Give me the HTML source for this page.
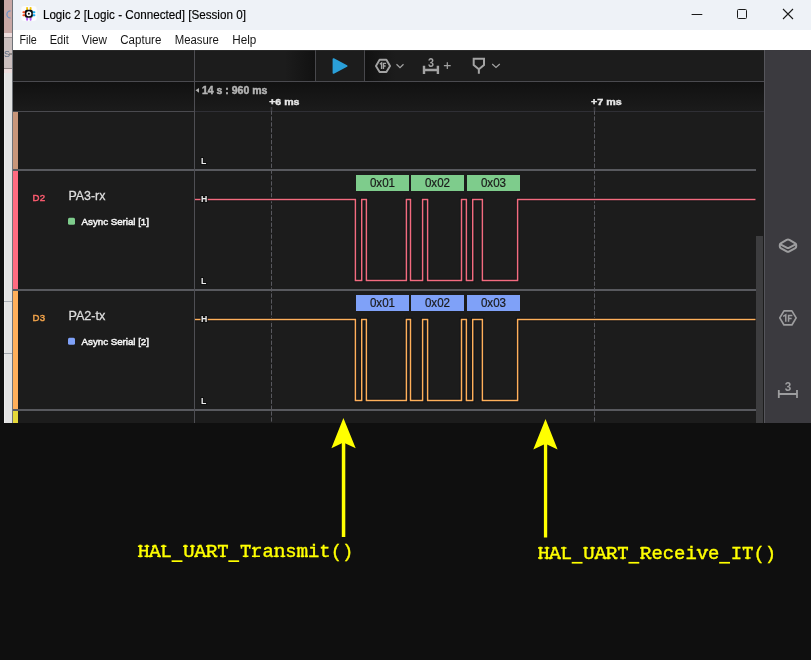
<!DOCTYPE html>
<html><head><meta charset="utf-8">
<style>
html,body{margin:0;padding:0;}
body{width:811px;height:660px;overflow:hidden;background:#0f0f0f;position:relative;font-family:"Liberation Sans",sans-serif;}
.a{position:absolute;}
.t{position:absolute;white-space:nowrap;line-height:1;}
svg text{font-family:"Liberation Sans",sans-serif;} svg text.mono{font-family:"Liberation Mono",monospace;}
</style></head>
<body>
<div class="a" style="left:0px;top:0px;width:4px;height:660px;background:#0f0f0f;"></div>
<div class="a" style="left:4px;top:0px;width:8px;height:33px;background:#c9a8a5;"></div>
<div class="a" style="left:4px;top:33px;width:8px;height:4px;background:#eddcdc;"></div>
<div class="a" style="left:4px;top:37px;width:8px;height:1px;background:#9a9090;"></div>
<div class="a" style="left:4px;top:38px;width:8px;height:30px;background:#cbbfbe;"></div>
<div class="a" style="left:4px;top:68px;width:8px;height:1px;background:#8f8585;"></div>
<div class="a" style="left:4px;top:69px;width:8px;height:4px;background:#ecdcdc;"></div>
<div class="a" style="left:4px;top:73px;width:8px;height:350px;background:#e2e2e2;"></div>
<div class="a" style="left:4px;top:73px;width:1px;height:350px;background:#ececec;"></div>
<div class="a" style="left:4px;top:301px;width:8px;height:1px;background:#a9afb5;"></div>
<div class="a" style="left:4px;top:353px;width:8px;height:1px;background:#9fa5ab;"></div>
<div class="a" style="left:12px;top:0px;width:1px;height:423px;background:#6f7378;"></div>
<div class="a" style="left:13px;top:0px;width:798px;height:30px;background:#eef2f7;"></div>
<div class="a" style="left:13px;top:30px;width:798px;height:20px;background:#ffffff;"></div>
<div class="a" style="left:13px;top:50px;width:798px;height:373px;background:#1c1c1c;"></div>
<svg class="a" style="left:0;top:0;will-change:transform" width="811" height="660" viewBox="0 0 811 660"><rect x="13" y="50" width="751" height="31" fill="#1c1c1c"/><defs><linearGradient id="shL" x1="0" x2="1" y1="0" y2="0"><stop offset="0" stop-color="#1c1c1c"/><stop offset="1" stop-color="#111"/></linearGradient><linearGradient id="shR" x1="0" x2="1" y1="0" y2="0"><stop offset="0" stop-color="#111"/><stop offset="1" stop-color="#1c1c1c"/></linearGradient><linearGradient id="tb" x1="0" x2="0" y1="0" y2="1"><stop offset="0" stop-color="#111"/><stop offset="1" stop-color="#1b1b1b"/></linearGradient></defs><rect x="285" y="50" width="30" height="31" fill="url(#shL)"/><rect x="365" y="50" width="30" height="31" fill="url(#shR)"/><rect x="13" y="50" width="751" height="1" fill="#2a2a2a"/><rect x="315" y="50" width="1" height="31" fill="#48484c"/><rect x="364" y="50" width="1" height="31" fill="#48484c"/><rect x="13" y="81" width="751" height="1" fill="#4a4a4f"/><rect x="13" y="82" width="751" height="29" fill="url(#tb)"/><rect x="13" y="111" width="181" height="1" fill="#4a4a4f"/><rect x="195" y="111" width="569" height="1" fill="#2f2f35"/><rect x="13" y="112" width="751" height="311" fill="#1c1c1c"/><rect x="13" y="169" width="743" height="2" fill="#58595e"/><rect x="13" y="289" width="743" height="2" fill="#58595e"/><rect x="13" y="409" width="743" height="2" fill="#58595e"/><rect x="13" y="112" width="5" height="57" fill="#c8967a"/><rect x="13" y="171" width="5" height="118" fill="#ff6b81"/><rect x="13" y="291" width="5" height="118" fill="#ffaf5a"/><rect x="13" y="411" width="5" height="12" fill="#e5d83a"/><rect x="194" y="50" width="1" height="373" fill="#4e4e53"/><line x1="271.5" y1="110.5" x2="271.5" y2="423" stroke="#58585e" stroke-width="1" stroke-dasharray="4.3 1.6"/><rect x="270.7" y="107" width="1.6" height="4" fill="#3c3c41"/><line x1="594.5" y1="110.5" x2="594.5" y2="423" stroke="#58585e" stroke-width="1" stroke-dasharray="4.3 1.6"/><rect x="593.7" y="107" width="1.6" height="4" fill="#3c3c41"/><rect x="764" y="50" width="1" height="373" fill="#56565c"/><rect x="765" y="50" width="46" height="373" fill="#3b3a3f"/><rect x="756" y="236" width="7" height="187" fill="#3d3d3f"/><path d="M195 199.5 L355.4 199.5 L355.4 280.5 L361.7 280.5 L361.7 199.5 L366.4 199.5 L366.4 280.5 L406.4 280.5 L406.4 199.5 L410.5 199.5 L410.5 280.5 L422.6 280.5 L422.6 199.5 L427.6 199.5 L427.6 280.5 L461.5 280.5 L461.5 199.5 L466.4 199.5 L466.4 280.5 L472.7 280.5 L472.7 199.5 L482.4 199.5 L482.4 280.5 L517.6 280.5 L517.6 199.5 L755.5 199.5" fill="none" stroke="#0c1515" stroke-width="3.5" stroke-linejoin="miter"/><path d="M195 199.5 L355.4 199.5 L355.4 280.5 L361.7 280.5 L361.7 199.5 L366.4 199.5 L366.4 280.5 L406.4 280.5 L406.4 199.5 L410.5 199.5 L410.5 280.5 L422.6 280.5 L422.6 199.5 L427.6 199.5 L427.6 280.5 L461.5 280.5 L461.5 199.5 L466.4 199.5 L466.4 280.5 L472.7 280.5 L472.7 199.5 L482.4 199.5 L482.4 280.5 L517.6 280.5 L517.6 199.5 L755.5 199.5" fill="none" stroke="#f36b7f" stroke-width="1.5" stroke-linejoin="miter"/><path d="M195 319.5 L355.4 319.5 L355.4 400.5 L361.7 400.5 L361.7 319.5 L366.4 319.5 L366.4 400.5 L406.4 400.5 L406.4 319.5 L410.5 319.5 L410.5 400.5 L422.6 400.5 L422.6 319.5 L427.6 319.5 L427.6 400.5 L461.5 400.5 L461.5 319.5 L466.4 319.5 L466.4 400.5 L472.7 400.5 L472.7 319.5 L482.4 319.5 L482.4 400.5 L517.6 400.5 L517.6 319.5 L755.5 319.5" fill="none" stroke="#0b0f17" stroke-width="3.5" stroke-linejoin="miter"/><path d="M195 319.5 L355.4 319.5 L355.4 400.5 L361.7 400.5 L361.7 319.5 L366.4 319.5 L366.4 400.5 L406.4 400.5 L406.4 319.5 L410.5 319.5 L410.5 400.5 L422.6 400.5 L422.6 319.5 L427.6 319.5 L427.6 400.5 L461.5 400.5 L461.5 319.5 L466.4 319.5 L466.4 400.5 L472.7 400.5 L472.7 319.5 L482.4 319.5 L482.4 400.5 L517.6 400.5 L517.6 319.5 L755.5 319.5" fill="none" stroke="#ffb05a" stroke-width="1.5" stroke-linejoin="miter"/><rect x="356" y="175" width="53" height="16" fill="#7ecc8c"/><text x="382.5" y="187.3" font-size="13.2" fill="#1a1a1a" stroke="#1a1a1a" stroke-width="0.2" text-anchor="middle" textLength="25.2" lengthAdjust="spacingAndGlyphs">0x01</text><rect x="411" y="175" width="53" height="16" fill="#7ecc8c"/><text x="437.5" y="187.3" font-size="13.2" fill="#1a1a1a" stroke="#1a1a1a" stroke-width="0.2" text-anchor="middle" textLength="25.2" lengthAdjust="spacingAndGlyphs">0x02</text><rect x="467" y="175" width="53" height="16" fill="#7ecc8c"/><text x="493.5" y="187.3" font-size="13.2" fill="#1a1a1a" stroke="#1a1a1a" stroke-width="0.2" text-anchor="middle" textLength="25.2" lengthAdjust="spacingAndGlyphs">0x03</text><rect x="356" y="295" width="53" height="16" fill="#7fa1f8"/><text x="382.5" y="307.3" font-size="13.2" fill="#1a1a1a" stroke="#1a1a1a" stroke-width="0.2" text-anchor="middle" textLength="25.2" lengthAdjust="spacingAndGlyphs">0x01</text><rect x="411" y="295" width="53" height="16" fill="#7fa1f8"/><text x="437.5" y="307.3" font-size="13.2" fill="#1a1a1a" stroke="#1a1a1a" stroke-width="0.2" text-anchor="middle" textLength="25.2" lengthAdjust="spacingAndGlyphs">0x02</text><rect x="467" y="295" width="53" height="16" fill="#7fa1f8"/><text x="493.5" y="307.3" font-size="13.2" fill="#1a1a1a" stroke="#1a1a1a" stroke-width="0.2" text-anchor="middle" textLength="25.2" lengthAdjust="spacingAndGlyphs">0x03</text><path d="M195.5 90.3 L199 87.9 L199 92.8 Z" fill="#b0b0b0"/><text x="201.9" y="93.8" font-size="10.3" font-weight="bold" fill="#b4b4b4" stroke="#b4b4b4" stroke-width="0.45" textLength="65.5" lengthAdjust="spacingAndGlyphs">14 s : 960 ms</text><text x="269.2" y="104.7" font-size="9" font-weight="bold" fill="#e6e6e6" stroke="#e6e6e6" stroke-width="0.4" textLength="30.3" lengthAdjust="spacingAndGlyphs">+6 ms</text><text x="591" y="104.9" font-size="9" font-weight="bold" fill="#e6e6e6" stroke="#e6e6e6" stroke-width="0.4" textLength="30.6" lengthAdjust="spacingAndGlyphs">+7 ms</text><text x="200.9" y="164.1" font-size="8.7" font-weight="bold" fill="#eeeeee" stroke="#101010" stroke-width="2" paint-order="stroke">L</text><text x="200.9" y="202.1" font-size="8.7" font-weight="bold" fill="#eeeeee" stroke="#101010" stroke-width="2" paint-order="stroke">H</text><text x="200.9" y="284.1" font-size="8.7" font-weight="bold" fill="#eeeeee" stroke="#101010" stroke-width="2" paint-order="stroke">L</text><text x="200.9" y="322.1" font-size="8.7" font-weight="bold" fill="#eeeeee" stroke="#101010" stroke-width="2" paint-order="stroke">H</text><text x="200.9" y="404.1" font-size="8.7" font-weight="bold" fill="#eeeeee" stroke="#101010" stroke-width="2" paint-order="stroke">L</text><text x="32.5" y="201.2" font-size="9.6" fill="#ff5c70" stroke="#ff5c70" stroke-width="0.45" textLength="12.6" lengthAdjust="spacing">D2</text><text x="68.4" y="199.8" font-size="13" fill="#dedede" stroke="#dedede" stroke-width="0.3" textLength="37" lengthAdjust="spacingAndGlyphs">PA3-rx</text><rect x="68" y="217.7" width="7" height="7" rx="1.5" fill="#7ecc8c"/><text x="81.6" y="224.7" font-size="9.8" fill="#f4f4f4" stroke="#f4f4f4" stroke-width="0.5" textLength="67.4" lengthAdjust="spacing">Async Serial [1]</text><text x="32.5" y="321.2" font-size="9.6" fill="#f0a24a" stroke="#f0a24a" stroke-width="0.45" textLength="12.6" lengthAdjust="spacing">D3</text><text x="68.4" y="319.8" font-size="13" fill="#dedede" stroke="#dedede" stroke-width="0.3" textLength="37" lengthAdjust="spacingAndGlyphs">PA2-tx</text><rect x="68" y="337.7" width="7" height="7" rx="1.5" fill="#7fa1f8"/><text x="81.6" y="344.7" font-size="9.8" fill="#f4f4f4" stroke="#f4f4f4" stroke-width="0.5" textLength="67.4" lengthAdjust="spacing">Async Serial [2]</text><path d="M343.4 418 L355.7 448.3 L343.4 442.6 L331.4 448.3 Z" fill="#ffff00"/><rect x="341.8" y="440" width="3.5" height="97" fill="#ffff00"/><path d="M545.5 419.1 L557.6 449.4 L545.5 443.7 L533.3 449.4 Z" fill="#ffff00"/><rect x="543.9" y="441" width="3.3" height="96.5" fill="#ffff00"/><text class="mono" x="137.90" y="557" font-size="17.5" fill="#ffff00" stroke="#ffff00" stroke-width="0.35" textLength="11.34" lengthAdjust="spacingAndGlyphs">H</text><rect x="137.90" y="545.50" width="4.75" height="1.5" fill="#ffff00"/><rect x="144.49" y="545.50" width="4.75" height="1.5" fill="#ffff00"/><rect x="137.90" y="555.50" width="4.75" height="1.5" fill="#ffff00"/><rect x="144.49" y="555.50" width="4.75" height="1.5" fill="#ffff00"/><text class="mono" x="149.24" y="557" font-size="17.5" fill="#ffff00" stroke="#ffff00" stroke-width="0.35" textLength="11.34" lengthAdjust="spacingAndGlyphs">A</text><rect x="148.92" y="555.50" width="3.78" height="1.5" fill="#ffff00"/><rect x="157.12" y="555.50" width="3.78" height="1.5" fill="#ffff00"/><rect x="152.05" y="545.50" width="3.24" height="1.5" fill="#ffff00"/><text class="mono" x="160.58" y="557" font-size="17.5" fill="#ffff00" stroke="#ffff00" stroke-width="0.35" textLength="11.34" lengthAdjust="spacingAndGlyphs">L</text><rect x="160.90" y="545.50" width="5.51" height="1.5" fill="#ffff00"/><rect x="171.62" y="560.3" width="10.84" height="1.7" fill="#ffff00"/><text class="mono" x="183.26" y="557" font-size="17.5" fill="#ffff00" stroke="#ffff00" stroke-width="0.35" textLength="11.34" lengthAdjust="spacingAndGlyphs">U</text><rect x="183.04" y="545.50" width="4.75" height="1.5" fill="#ffff00"/><rect x="190.06" y="545.50" width="4.75" height="1.5" fill="#ffff00"/><text class="mono" x="194.60" y="557" font-size="17.5" fill="#ffff00" stroke="#ffff00" stroke-width="0.35" textLength="11.34" lengthAdjust="spacingAndGlyphs">A</text><rect x="194.28" y="555.50" width="3.78" height="1.5" fill="#ffff00"/><rect x="202.48" y="555.50" width="3.78" height="1.5" fill="#ffff00"/><rect x="197.41" y="545.50" width="3.24" height="1.5" fill="#ffff00"/><text class="mono" x="205.94" y="557" font-size="17.5" fill="#ffff00" stroke="#ffff00" stroke-width="0.35" textLength="11.34" lengthAdjust="spacingAndGlyphs">R</text><rect x="205.94" y="555.50" width="4.75" height="1.5" fill="#ffff00"/><rect x="213.93" y="555.50" width="3.67" height="1.5" fill="#ffff00"/><rect x="205.94" y="545.50" width="2.16" height="1.5" fill="#ffff00"/><text class="mono" x="217.28" y="557" font-size="17.5" fill="#ffff00" stroke="#ffff00" stroke-width="0.35" textLength="11.34" lengthAdjust="spacingAndGlyphs">T</text><rect x="220.09" y="555.50" width="5.72" height="1.5" fill="#ffff00"/><rect x="218.04" y="545.50" width="1.51" height="3.2" fill="#ffff00"/><rect x="226.35" y="545.50" width="1.51" height="3.2" fill="#ffff00"/><rect x="228.32" y="560.3" width="10.84" height="1.7" fill="#ffff00"/><text class="mono" x="239.96" y="557" font-size="17.5" fill="#ffff00" stroke="#ffff00" stroke-width="0.35" textLength="11.34" lengthAdjust="spacingAndGlyphs">T</text><rect x="242.77" y="555.50" width="5.72" height="1.5" fill="#ffff00"/><rect x="240.72" y="545.50" width="1.51" height="3.2" fill="#ffff00"/><rect x="249.03" y="545.50" width="1.51" height="3.2" fill="#ffff00"/><text class="mono" x="251.30" y="557" font-size="17.5" fill="#ffff00" stroke="#ffff00" stroke-width="0.35" textLength="11.34" lengthAdjust="spacingAndGlyphs">r</text><rect x="251.95" y="555.50" width="7.99" height="1.5" fill="#ffff00"/><rect x="251.95" y="547.60" width="3.24" height="1.5" fill="#ffff00"/><text class="mono" x="262.64" y="557" font-size="17.5" fill="#ffff00" stroke="#ffff00" stroke-width="0.35" textLength="11.34" lengthAdjust="spacingAndGlyphs">a</text><text class="mono" x="273.98" y="557" font-size="17.5" fill="#ffff00" stroke="#ffff00" stroke-width="0.35" textLength="11.34" lengthAdjust="spacingAndGlyphs">n</text><rect x="273.98" y="555.50" width="4.86" height="1.5" fill="#ffff00"/><rect x="280.46" y="555.50" width="4.86" height="1.5" fill="#ffff00"/><rect x="273.98" y="547.60" width="3.24" height="1.5" fill="#ffff00"/><text class="mono" x="285.32" y="557" font-size="17.5" fill="#ffff00" stroke="#ffff00" stroke-width="0.35" textLength="11.34" lengthAdjust="spacingAndGlyphs">s</text><text class="mono" x="296.66" y="557" font-size="17.5" fill="#ffff00" stroke="#ffff00" stroke-width="0.35" textLength="11.34" lengthAdjust="spacingAndGlyphs">m</text><rect x="296.66" y="555.50" width="3.35" height="1.5" fill="#ffff00"/><rect x="300.66" y="555.50" width="3.35" height="1.5" fill="#ffff00"/><rect x="304.65" y="555.50" width="3.35" height="1.5" fill="#ffff00"/><rect x="296.66" y="547.60" width="2.27" height="1.5" fill="#ffff00"/><text class="mono" x="308.00" y="557" font-size="17.5" fill="#ffff00" stroke="#ffff00" stroke-width="0.35" textLength="11.34" lengthAdjust="spacingAndGlyphs">i</text><text class="mono" x="319.34" y="557" font-size="17.5" fill="#ffff00" stroke="#ffff00" stroke-width="0.35" textLength="11.34" lengthAdjust="spacingAndGlyphs">t</text><text class="mono" x="330.68" y="557" font-size="17.5" fill="#ffff00" stroke="#ffff00" stroke-width="0.35" textLength="11.34" lengthAdjust="spacingAndGlyphs">(</text><text class="mono" x="342.02" y="557" font-size="17.5" fill="#ffff00" stroke="#ffff00" stroke-width="0.35" textLength="11.34" lengthAdjust="spacingAndGlyphs">)</text><text class="mono" x="538.00" y="558.7" font-size="17.5" fill="#ffff00" stroke="#ffff00" stroke-width="0.35" textLength="11.34" lengthAdjust="spacingAndGlyphs">H</text><rect x="538.00" y="547.20" width="4.75" height="1.5" fill="#ffff00"/><rect x="544.59" y="547.20" width="4.75" height="1.5" fill="#ffff00"/><rect x="538.00" y="557.20" width="4.75" height="1.5" fill="#ffff00"/><rect x="544.59" y="557.20" width="4.75" height="1.5" fill="#ffff00"/><text class="mono" x="549.34" y="558.7" font-size="17.5" fill="#ffff00" stroke="#ffff00" stroke-width="0.35" textLength="11.34" lengthAdjust="spacingAndGlyphs">A</text><rect x="549.02" y="557.20" width="3.78" height="1.5" fill="#ffff00"/><rect x="557.22" y="557.20" width="3.78" height="1.5" fill="#ffff00"/><rect x="552.15" y="547.20" width="3.24" height="1.5" fill="#ffff00"/><text class="mono" x="560.68" y="558.7" font-size="17.5" fill="#ffff00" stroke="#ffff00" stroke-width="0.35" textLength="11.34" lengthAdjust="spacingAndGlyphs">L</text><rect x="561.00" y="547.20" width="5.51" height="1.5" fill="#ffff00"/><rect x="571.72" y="561.9" width="10.84" height="1.7" fill="#ffff00"/><text class="mono" x="583.36" y="558.7" font-size="17.5" fill="#ffff00" stroke="#ffff00" stroke-width="0.35" textLength="11.34" lengthAdjust="spacingAndGlyphs">U</text><rect x="583.14" y="547.20" width="4.75" height="1.5" fill="#ffff00"/><rect x="590.16" y="547.20" width="4.75" height="1.5" fill="#ffff00"/><text class="mono" x="594.70" y="558.7" font-size="17.5" fill="#ffff00" stroke="#ffff00" stroke-width="0.35" textLength="11.34" lengthAdjust="spacingAndGlyphs">A</text><rect x="594.38" y="557.20" width="3.78" height="1.5" fill="#ffff00"/><rect x="602.58" y="557.20" width="3.78" height="1.5" fill="#ffff00"/><rect x="597.51" y="547.20" width="3.24" height="1.5" fill="#ffff00"/><text class="mono" x="606.04" y="558.7" font-size="17.5" fill="#ffff00" stroke="#ffff00" stroke-width="0.35" textLength="11.34" lengthAdjust="spacingAndGlyphs">R</text><rect x="606.04" y="557.20" width="4.75" height="1.5" fill="#ffff00"/><rect x="614.03" y="557.20" width="3.67" height="1.5" fill="#ffff00"/><rect x="606.04" y="547.20" width="2.16" height="1.5" fill="#ffff00"/><text class="mono" x="617.38" y="558.7" font-size="17.5" fill="#ffff00" stroke="#ffff00" stroke-width="0.35" textLength="11.34" lengthAdjust="spacingAndGlyphs">T</text><rect x="620.19" y="557.20" width="5.72" height="1.5" fill="#ffff00"/><rect x="618.14" y="547.20" width="1.51" height="3.2" fill="#ffff00"/><rect x="626.45" y="547.20" width="1.51" height="3.2" fill="#ffff00"/><rect x="628.42" y="561.9" width="10.84" height="1.7" fill="#ffff00"/><text class="mono" x="640.06" y="558.7" font-size="17.5" fill="#ffff00" stroke="#ffff00" stroke-width="0.35" textLength="11.34" lengthAdjust="spacingAndGlyphs">R</text><rect x="640.06" y="557.20" width="4.75" height="1.5" fill="#ffff00"/><rect x="648.05" y="557.20" width="3.67" height="1.5" fill="#ffff00"/><rect x="640.06" y="547.20" width="2.16" height="1.5" fill="#ffff00"/><text class="mono" x="651.40" y="558.7" font-size="17.5" fill="#ffff00" stroke="#ffff00" stroke-width="0.35" textLength="11.34" lengthAdjust="spacingAndGlyphs">e</text><text class="mono" x="662.74" y="558.7" font-size="17.5" fill="#ffff00" stroke="#ffff00" stroke-width="0.35" textLength="11.34" lengthAdjust="spacingAndGlyphs">c</text><text class="mono" x="674.08" y="558.7" font-size="17.5" fill="#ffff00" stroke="#ffff00" stroke-width="0.35" textLength="11.34" lengthAdjust="spacingAndGlyphs">e</text><text class="mono" x="685.42" y="558.7" font-size="17.5" fill="#ffff00" stroke="#ffff00" stroke-width="0.35" textLength="11.34" lengthAdjust="spacingAndGlyphs">i</text><text class="mono" x="696.76" y="558.7" font-size="17.5" fill="#ffff00" stroke="#ffff00" stroke-width="0.35" textLength="11.34" lengthAdjust="spacingAndGlyphs">v</text><rect x="696.54" y="549.30" width="4.10" height="1.5" fill="#ffff00"/><rect x="704.21" y="549.30" width="4.10" height="1.5" fill="#ffff00"/><text class="mono" x="708.10" y="558.7" font-size="17.5" fill="#ffff00" stroke="#ffff00" stroke-width="0.35" textLength="11.34" lengthAdjust="spacingAndGlyphs">e</text><rect x="719.14" y="561.9" width="10.84" height="1.7" fill="#ffff00"/><text class="mono" x="730.78" y="558.7" font-size="17.5" fill="#ffff00" stroke="#ffff00" stroke-width="0.35" textLength="11.34" lengthAdjust="spacingAndGlyphs">I</text><text class="mono" x="742.12" y="558.7" font-size="17.5" fill="#ffff00" stroke="#ffff00" stroke-width="0.35" textLength="11.34" lengthAdjust="spacingAndGlyphs">T</text><rect x="744.93" y="557.20" width="5.72" height="1.5" fill="#ffff00"/><rect x="742.88" y="547.20" width="1.51" height="3.2" fill="#ffff00"/><rect x="751.19" y="547.20" width="1.51" height="3.2" fill="#ffff00"/><text class="mono" x="753.46" y="558.7" font-size="17.5" fill="#ffff00" stroke="#ffff00" stroke-width="0.35" textLength="11.34" lengthAdjust="spacingAndGlyphs">(</text><text class="mono" x="764.80" y="558.7" font-size="17.5" fill="#ffff00" stroke="#ffff00" stroke-width="0.35" textLength="11.34" lengthAdjust="spacingAndGlyphs">)</text><text x="42.9" y="18.6" font-size="12" fill="#000" stroke="#000" stroke-width="0.15" textLength="203" lengthAdjust="spacingAndGlyphs">Logic 2 [Logic - Connected] [Session 0]</text><text x="19.5" y="43.7" font-size="12" fill="#161616" textLength="17.3" lengthAdjust="spacingAndGlyphs">File</text><text x="49.7" y="43.7" font-size="12" fill="#161616" textLength="19.1" lengthAdjust="spacingAndGlyphs">Edit</text><text x="81.8" y="43.7" font-size="12" fill="#161616" textLength="25.2" lengthAdjust="spacingAndGlyphs">View</text><text x="120.3" y="43.7" font-size="12" fill="#161616" textLength="41.0" lengthAdjust="spacingAndGlyphs">Capture</text><text x="174.7" y="43.7" font-size="12" fill="#161616" textLength="44.2" lengthAdjust="spacingAndGlyphs">Measure</text><text x="232.3" y="43.7" font-size="12" fill="#161616" textLength="24.1" lengthAdjust="spacingAndGlyphs">Help</text><rect x="691.6" y="14" width="10.7" height="1" fill="#1a1a1a"/><rect x="737.5" y="9.5" width="9" height="9" rx="1" fill="none" stroke="#1a1a1a" stroke-width="1"/><path d="M783 9 L793 19 M793 9 L783 19" stroke="#1a1a1a" stroke-width="1.1"/><rect x="21.3" y="6" width="15.4" height="15" rx="3.2" fill="#fbfcfe"/><rect x="26.150000000000002" y="6.9" width="1.9" height="3.4" rx="0.95" fill="#f7c600"/><rect x="26.150000000000002" y="17.3" width="1.9" height="3.4" rx="0.95" fill="#b455f5"/><rect x="29.650000000000002" y="6.9" width="1.9" height="3.4" rx="0.95" fill="#f7c600"/><rect x="29.650000000000002" y="17.3" width="1.9" height="3.4" rx="0.95" fill="#b455f5"/><rect x="22.4" y="11.350000000000001" width="3.4" height="1.9" rx="0.95" fill="#f24a22"/><rect x="32.0" y="11.350000000000001" width="3.4" height="1.9" rx="0.95" fill="#18aef2"/><rect x="22.4" y="14.25" width="3.4" height="1.9" rx="0.95" fill="#f24a22"/><rect x="32.0" y="14.25" width="3.4" height="1.9" rx="0.95" fill="#18aef2"/><rect x="24.9" y="9.8" width="7.9" height="7.9" rx="2" fill="#0d0d10"/><circle cx="28.85" cy="13.75" r="1.75" fill="none" stroke="#fff" stroke-width="1.5"/><path d="M12 10.8 A3.6 3.6 0 0 0 12 18" fill="none" stroke="#6a90c4" stroke-width="1.2" transform="translate(-1.5 0)"/><text x="4" y="57" font-size="9" fill="#5a6a80">S</text><rect x="9" y="53.5" width="3" height="1" fill="#555"/><path d="M333.5 59.1 L346.6 66 L333.5 72.9 Z" fill="#2a9fd8" stroke="#2a9fd8" stroke-width="1.8" stroke-linejoin="round"/><path d="M379.616 59.75000000000001 L386.384 59.75000000000001 L390.05 65.9 L386.384 72.05000000000001 L379.616 72.05000000000001 L375.95 65.9 Z" fill="none" stroke="#a3a3a3" stroke-width="1.9" stroke-linejoin="round"/><path d="M379.80 64.16 L381.56 62.80 L381.56 69.00 M383.45 69.00 L383.45 63.36 L386.10 63.36 M383.45 66.02 L385.60 66.02" fill="none" stroke="#a3a3a3" stroke-width="1.35" stroke-linejoin="miter" stroke-linecap="butt"/><path d="M396.5 64.2 L400 67.6 L403.5 64.2" fill="none" stroke="#a3a3a3" stroke-width="1.2"/><text x="431" y="67" font-size="12.4" font-weight="bold" fill="#a3a3a3" text-anchor="middle" textLength="6" lengthAdjust="spacingAndGlyphs">3</text><path d="M424 65.8 V74 M437.9 65.8 V74 M424 70 H437.9" fill="none" stroke="#a3a3a3" stroke-width="2.4"/><path d="M447.3 62.2 V69 M443.9 65.6 H450.7" fill="none" stroke="#a3a3a3" stroke-width="1.2"/><path d="M473.7 58.8 H484 V65 L478.85 69.3 L473.7 65 Z M478.85 69.3 V73.8" fill="none" stroke="#a3a3a3" stroke-width="2" stroke-linejoin="miter"/><path d="M492.2 64 L496 67.5 L499.8 64" fill="none" stroke="#a3a3a3" stroke-width="1.2"/><path d="M786.6 239.9 Q788 239.1 789.4 239.9 L795.3 243.3 Q796.2 243.8 796.2 244.9 L796.2 246.6 Q796.2 247.6 795.3 248.1 L789.4 251.4 Q788 252.2 786.6 251.4 L780.7 248.1 Q779.8 247.6 779.8 246.6 L779.8 244.9 Q779.8 243.8 780.7 243.3 Z" fill="none" stroke="#9d9d9f" stroke-width="2" stroke-linejoin="round"/><path d="M780 244.2 L786.6 247.6 Q788 248.4 789.4 247.6 L796 244.2" fill="none" stroke="#9d9d9f" stroke-width="2" stroke-linejoin="round"/><path d="M784.014 310.84999999999997 L791.8860000000001 310.84999999999997 L796.1500000000001 317.9 L791.8860000000001 324.95 L784.014 324.95 L779.75 317.9 Z" fill="none" stroke="#9d9d9f" stroke-width="1.7" stroke-linejoin="round"/><path d="M783.20 316.34 L785.78 314.80 L785.78 321.80 M788.54 321.80 L788.54 315.43 L792.40 315.43 M788.54 318.44 L791.66 318.44" fill="none" stroke="#9d9d9f" stroke-width="1.5" stroke-linejoin="miter" stroke-linecap="butt"/><text x="788" y="390.8" font-size="12.2" font-weight="bold" fill="#9d9d9f" text-anchor="middle" textLength="6.5" lengthAdjust="spacingAndGlyphs">3</text><path d="M778.8 390 V397.9 M797 390 V397.9 M778.8 394 H797" fill="none" stroke="#9d9d9f" stroke-width="1.8"/></svg>
</body></html>
